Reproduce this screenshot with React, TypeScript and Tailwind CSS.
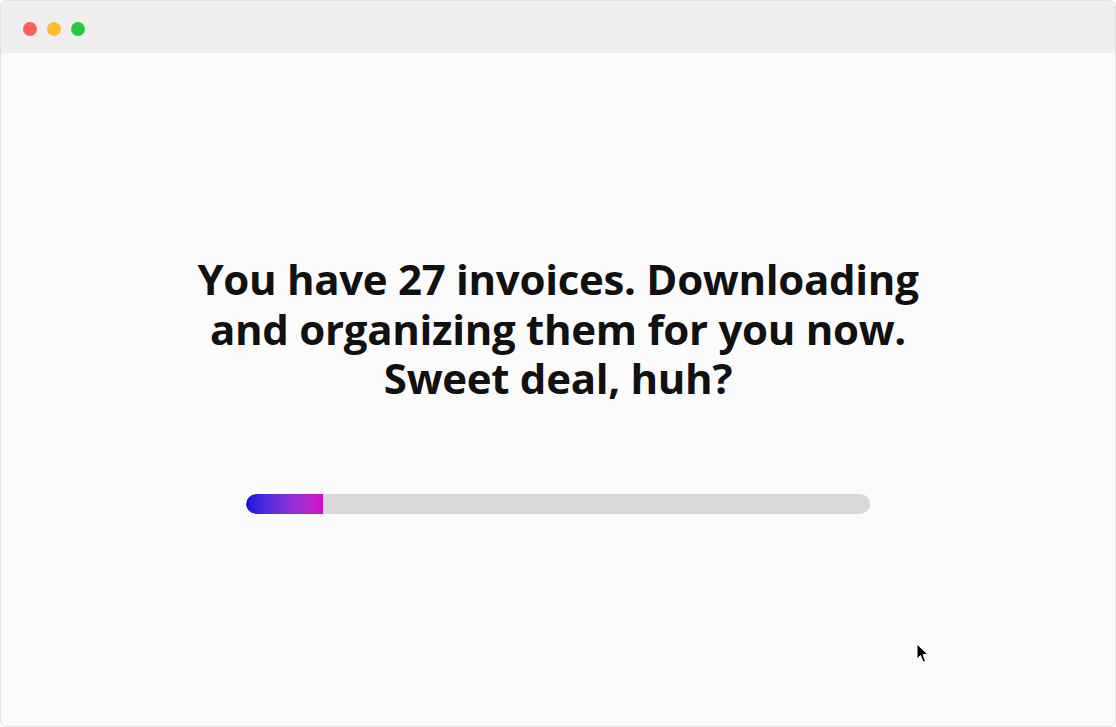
const App = () => {
  const progress = 12.4;
  return (
    <div className="w-[1116px] h-[727px] bg-white" style={{ fontFamily: "'Open Sans', 'Noto Sans', sans-serif" }}>
      <div className="flex flex-col w-full h-full border border-[#e3e3e3] rounded-md overflow-hidden bg-[#fbfbfb]">
        <div className="flex items-center gap-[10px] h-[52px] px-[22px] pt-[4px] bg-[#efefef] shrink-0">
          <div className="w-[14px] h-[14px] rounded-full bg-[#fe5f57]" />
          <div className="w-[14px] h-[14px] rounded-full bg-[#febc2e]" />
          <div className="w-[14px] h-[14px] rounded-full bg-[#28c840]" />
        </div>

        <div className="relative flex-1 flex flex-col items-center pt-[201px]">
          <h1 className="text-center text-[42px] leading-[49.5px] font-bold text-[#111] tracking-[-0.3px]">
            You have 27 invoices. Downloading
            <br />
            and organizing them for you now.
            <br />
            Sweet deal, huh?
          </h1>

          <div className="mt-[91.5px] w-[624px] h-[20px] rounded-full bg-[#d9d9d9] overflow-hidden">
            <div
              className="h-full rounded-l-full bg-gradient-to-r from-[#1010de] to-[#d600cc]"
              style={{ width: `${progress}%` }}
            />
          </div>

          <svg className="absolute left-[915px] top-[590px]" width="14" height="22" viewBox="0 0 14 22">
            <path d="M1 1 L1 16 L4.5 12.5 L7 19 L9.5 18 L7 11.5 L12 11.5 Z" fill="#000" stroke="#fff" strokeWidth="1" />
          </svg>
        </div>
      </div>
    </div>
  );
};

export default App;
